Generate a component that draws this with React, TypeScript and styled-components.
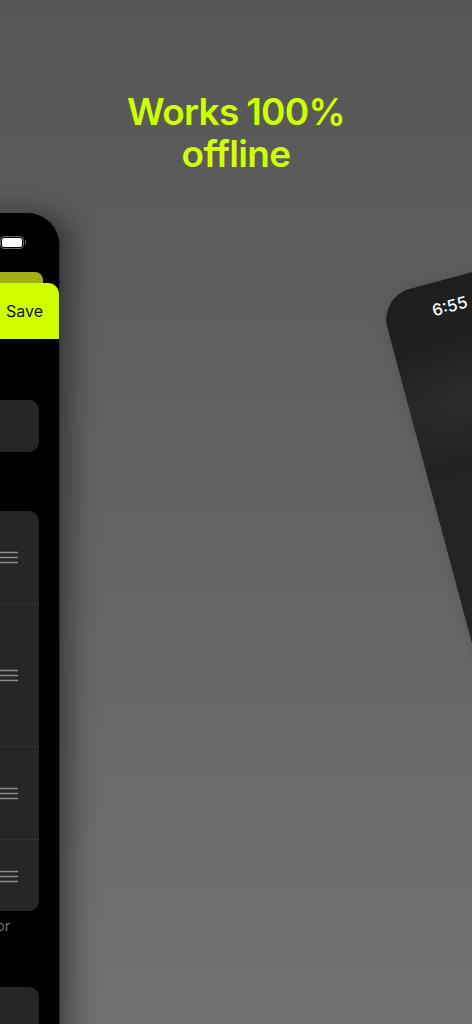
import styled, { createGlobalStyle } from 'styled-components';

const GlobalStyle = createGlobalStyle`
  html, body {
    margin: 0;
    height: 1024px;
    overflow: hidden;
    background: #5f5f5f;
  }
`;

const Page = styled.div`
  position: relative;
  width: 472px;
  height: 1024px;
  overflow: hidden;
  background: linear-gradient(180deg, #555655 0%, #707170 100%);
  font-family: Inter, "Liberation Sans", sans-serif;
`;

const Title = styled.h1`
  margin: 0;
  padding-top: 91px;
  font-family: Inter, "Liberation Sans", sans-serif;
  font-size: 37px;
  line-height: 42px;
  font-weight: 600;
  letter-spacing: -0.7px;
  word-spacing: -1px;
  color: #d0ff00;
  text-align: center;
`;

const EditorPhone = styled.div`
  position: absolute;
  left: -341px;
  top: 213px;
  width: 400px;
  height: 900px;
  box-sizing: border-box;
  padding-top: 23px;
  background: #000;
  border-radius: 32px;
  box-shadow: 1px 0 0 #2b2b2b, 12px 0 28px rgba(0, 0, 0, 0.42);
`;

const StatusBar = styled.div`
  display: flex;
  justify-content: flex-end;
  height: 13px;
  padding-right: 35px;
`;

const Battery = styled.div`
  position: relative;
  width: 24px;
  height: 13px;
  box-sizing: border-box;
  padding: 1px;
  border: 1px solid #666;
  border-radius: 4px;

  &::before {
    content: '';
    display: block;
    height: 100%;
    background: #fff;
    border-radius: 2px;
  }

  &::after {
    content: '';
    position: absolute;
    right: -3px;
    top: 3px;
    width: 1px;
    height: 5px;
    background: #666;
    border-radius: 0 1px 1px 0;
  }
`;

const BackSheet = styled.div`
  height: 11px;
  margin: 23px 16px 0 0;
  background: #a3b014;
  border-radius: 8px 8px 0 0;
`;

const Header = styled.div`
  display: flex;
  justify-content: flex-end;
  align-items: center;
  height: 56px;
  padding-right: 16px;
  background: #d0ff00;
  border-radius: 11px 11px 0 0;
  color: #111;
  font-size: 16px;
`;

const Content = styled.div`
  display: flex;
  flex-direction: column;
  padding: 61px 20px 0 0;
`;

const Card = styled.div<{ $height?: number }>`
  display: flex;
  flex-direction: column;
  height: ${(p) => (p.$height ? `${p.$height}px` : 'auto')};
  background: #262626;
  border-radius: 10px;
`;

const SongsCard = styled(Card)`
  margin-top: 59px;
`;

const LastCard = styled(Card)`
  margin-top: 52px;
`;

const Row = styled.div<{ $height: number }>`
  display: flex;
  justify-content: flex-end;
  align-items: center;
  height: ${(p) => p.$height}px;
  box-sizing: border-box;
  padding-right: 21px;
  border-top: 1px solid #323232;

  &:first-child {
    border-top: none;
  }
`;

const HandleIcon = styled.svg`
  display: block;
  width: 18px;
  height: 14px;
  stroke: #8c8c8c;
  stroke-width: 1.6;
`;

const Caption = styled.div`
  padding: 6px 29px 0 0;
  font-size: 14px;
  line-height: 18px;
  color: #777;
  text-align: right;
`;

const LockPhone = styled.div`
  position: absolute;
  left: 379px;
  top: 297px;
  width: 400px;
  height: 860px;
  box-sizing: border-box;
  padding: 17px 0 0 48px;
  background: radial-gradient(ellipse 200px 60px at 100px 122px, #2e2e2e 0%, rgba(46, 46, 46, 0) 100%),
    linear-gradient(180deg, #1e1e1e 0%, #232323 25%, #262626 60%);
  border-radius: 32px;
  box-shadow: 0 0 14px rgba(0, 0, 0, 0.12);
  transform: rotate(-15deg);
  transform-origin: top left;
`;

const Time = styled.div`
  font-size: 16.5px;
  line-height: 20px;
  font-weight: 500;
  color: #fff;
`;

const rows = [92, 143, 93, 72];

export default function App() {
  return (
    <Page>
      <GlobalStyle />
      <Title>
        Works 100%
        <br />
        offline
      </Title>
      <EditorPhone>
        <StatusBar>
          <Battery />
        </StatusBar>
        <BackSheet />
        <Header>Save</Header>
        <Content>
          <Card $height={52} />
          <SongsCard>
            {rows.map((h) => (
              <Row key={h} $height={h}>
                <HandleIcon viewBox="0 0 18 14">
                  <path d="M0 2.5H18M0 7.5H18M0 12.5H18" />
                </HandleIcon>
              </Row>
            ))}
          </SongsCard>
          <Caption>or</Caption>
          <LastCard $height={120} />
        </Content>
      </EditorPhone>
      <LockPhone>
        <Time>6:55</Time>
      </LockPhone>
    </Page>
  );
}
